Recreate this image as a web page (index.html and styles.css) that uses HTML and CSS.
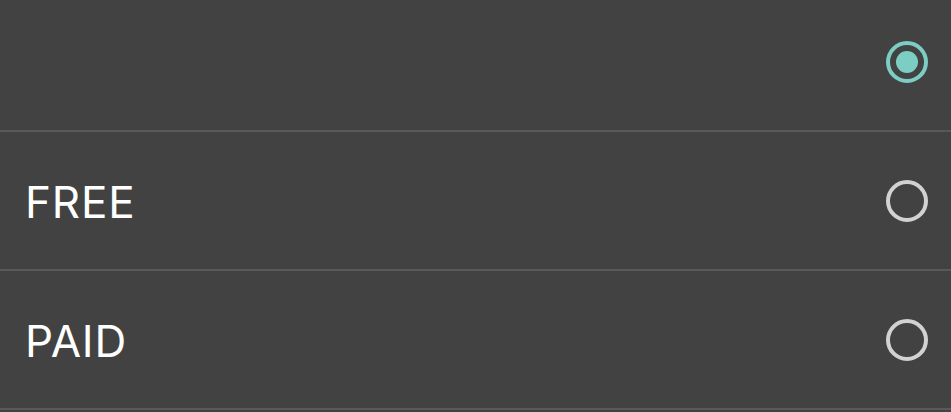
FILE: index.html
```html
<!DOCTYPE html>
<html lang="en">
<head>
    <meta charset="UTF-8">
    <meta name="viewport" content="width=device-width, initial-scale=1.0">
    <title>Price filter</title>
    <link rel="stylesheet" href="styles.css">
</head>
<body>
    <ul class="options">
        <li class="option">
            <span class="label"></span>
            <span class="radio checked"></span>
        </li>
        <li class="option">
            <span class="label">FREE</span>
            <span class="radio"></span>
        </li>
        <li class="option">
            <span class="label">PAID</span>
            <span class="radio"></span>
        </li>
    </ul>
</body>
</html>
```

FILE: styles.css
```css
/* price filter list */
body {
    margin: 0;
    background-color: #424242;
    font-family: Inter, "Open Sans", Arial, sans-serif;
    overflow: hidden;
}
.options {
    list-style: none;
    margin: -7px 0 0 0;
    padding: 0;
}
.option {
    display: flex;
    align-items: center;
    justify-content: space-between;
    height: 137px;
    padding: 0 23px 0 25px;
    border-bottom: 2px solid #595959;
}
.label {
    color: #ffffff;
    font-size: 44px;
    padding-top: 2px;
    letter-spacing: 0.8px;
}
.radio {
    width: 34px;
    height: 34px;
    border: 4px solid #d2d2d2;
    border-radius: 50%;
    box-sizing: content-box;
    position: relative;
}
.radio.checked {
    border-color: #7ccec5;
}
.radio.checked::after {
    content: "";
    position: absolute;
    left: 6px;
    top: 6px;
    width: 22px;
    height: 22px;
    border-radius: 50%;
    background-color: #7ccec5;
}
```
